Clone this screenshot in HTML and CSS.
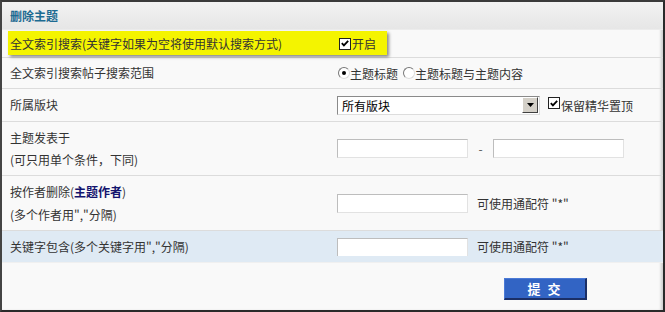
FILE: index.html
```html
<!DOCTYPE html>
<html lang="zh">
<head>
<meta charset="utf-8">
<link rel="stylesheet" href="styles.css">
</head>
<body>
<div class="frame">
  <div class="head">删除主题</div>

  <div class="row r1">
    <div class="mark"></div>
    <div class="label">全文索引搜索(关键字如果为空将使用默认搜索方式)</div>
    <div class="ctrl"><span class="cb"><svg viewBox="0 0 11 11" width="11" height="11"><path d="M2 5 L4.3 7.5 L9 2.5" fill="none" stroke="#000" stroke-width="2"/></svg></span><span>开启</span></div>
  </div>

  <div class="row r2">
    <div class="label">全文索引搜索帖子搜索范围</div>
    <div class="ctrl"><span class="radio on"></span><span>主题标题</span><span class="radio second"></span><span>主题标题与主题内容</span></div>
  </div>

  <div class="row r3">
    <div class="label">所属版块</div>
    <div class="ctrl"><div class="select"><span class="sel-text">所有版块</span><span class="sel-btn"><svg viewBox="0 0 7 4" width="7" height="4"><path d="M0 0 H7 L3.5 4 Z" fill="#000"/></svg></span></div><span class="cb cb2"><svg viewBox="0 0 11 11" width="11" height="11"><path d="M2 5 L4.3 7.5 L9 2.5" fill="none" stroke="#000" stroke-width="2"/></svg></span><span>保留精华置顶</span></div>
  </div>

  <div class="row r4">
    <div class="label">主题发表于<br>(可只用单个条件，下同)</div>
    <div class="ctrl"><span class="inp"></span><span class="dash">-</span><span class="inp"></span></div>
  </div>

  <div class="row r5">
    <div class="label">按作者删除(<span class="blue">主题作者</span>)<br>(多个作者用","分隔)</div>
    <div class="ctrl"><span class="inp"></span><span class="hint">可使用通配符 "*"</span></div>
  </div>

  <div class="row r6">
    <div class="label">关键字包含(多个关键字用","分隔)</div>
    <div class="ctrl"><span class="inp cut"></span><span class="hint">可使用通配符 "*"</span></div>
  </div>

  <div class="foot"><button class="submit">提 交</button></div>
</div>
</body>
</html>
```

FILE: styles.css
```css
* { box-sizing: border-box; }
html, body { margin: 0; padding: 0; }
body {
  width: 665px;
  height: 312px;
  font-family: "Noto Sans CJK SC", "Liberation Sans", sans-serif;
  font-size: 12px;
  color: #333;
  background: #f9f9f9;
}
.frame {
  width: 665px;
  height: 312px;
  border: 2px solid #2a2a2a;
  border-top-color: #3a3a3a;
  border-left-color: #444;
  background: #f9f9f9;
  box-shadow: inset -3px 0 3px -1px rgba(0,0,0,0.18);
  display: flex;
  flex-direction: column;
}
.head {
  height: 28px;
  line-height: 28px;
  padding-left: 8px;
  font-weight: bold;
  color: #1d6b92;
  background: linear-gradient(#f2f2f2, #e6e6e6);
  border-bottom: 1px solid #ececec;
}
.row {
  position: relative;
  display: grid;
  grid-template-columns: 335px 1fr;
  align-items: center;
  border-bottom: 1px solid #dcdcdc;
}
.label { padding-left: 8px; position: relative; line-height: 22px; }
.ctrl { display: flex; align-items: center; position: relative; white-space: nowrap; }
.r1 { height: 28px; }
.r2 { height: 31px; }
.r3 { height: 33px; }
.r4 { height: 54px; }
.r4 .label { line-height: 22px; }
.r5 { height: 55px; }
.r5 .label { line-height: 23px; }
.r6 { height: 31px; background: #dfeaf4; border-bottom: none; }

.mark {
  position: absolute;
  left: 6px;
  top: 1px;
  width: 379px;
  height: 24px;
  background: #f4f400;
  box-shadow: 2px 2px 3px rgba(0,0,0,0.45);
}

.cb {
  display: inline-flex;
  width: 12px;
  height: 12px;
  margin-left: 2px;
  border: 1px solid #222;
  background: #fff;
  align-items: center;
  justify-content: center;
  margin-right: 1px;
}
.cb svg { display: block; }
.cb2 { margin-left: 8px; position: relative; top: -2px; }

.radio {
  display: inline-block;
  width: 12px;
  height: 12px;
  border-radius: 50%;
  border: 1px solid #777;
  border-bottom-color: #ddd;
  border-right-color: #ddd;
  background: #fff;
  position: relative;
  margin-left: 1px;
}
.radio.on::after {
  content: "";
  position: absolute;
  left: 3px;
  top: 3px;
  width: 4px;
  height: 4px;
  border-radius: 50%;
  background: #000;
}
.radio.second { margin-left: 5px; }

.select {
  width: 203px;
  height: 19px;
  border: 1px solid #8a8a8a;
  border-bottom-color: #ddd;
  border-right-color: #ddd;
  background: #fff;
  display: flex;
  align-items: center;
  justify-content: space-between;
  color: #000;
  padding-left: 4px;
}
.sel-btn {
  width: 16px;
  height: 16px;
  background: #d4d0c8;
  border: 1px solid #fff;
  border-right-color: #404040;
  border-bottom-color: #404040;
  display: flex;
  align-items: center;
  justify-content: center;
  margin-right: 1px;
}
.sel-btn svg { display: block; }

.inp {
  display: inline-block;
  width: 131px;
  height: 19px;
  background: #fff;
  border: 1px solid #bdbdbd;
  border-bottom-color: #e2e2e2;
  border-right-color: #e2e2e2;
}
.inp.cut { border-bottom: none; height: 18px; }
.dash { width: 25px; text-align: center; color: #555; }
.hint { margin-left: 9px; }
.blue { color: #14146e; font-weight: bold; }

.foot {
  flex: 1;
  border-top: 1px solid #f0f0f0;
  padding-left: 502px;
  padding-top: 15px;
}
.submit {
  width: 83px;
  height: 22px;
  padding: 0;
  font-family: "Noto Sans CJK SC", sans-serif;
  font-size: 13px;
  font-weight: bold;
  color: #fff;
  background: #3264c4;
  border: 1px solid #4b7ad6;
  border-right: 2px solid #1b2f66;
  border-bottom: 2px solid #1b2f66;
  letter-spacing: 2px;
  line-height: 18px;
}
```
